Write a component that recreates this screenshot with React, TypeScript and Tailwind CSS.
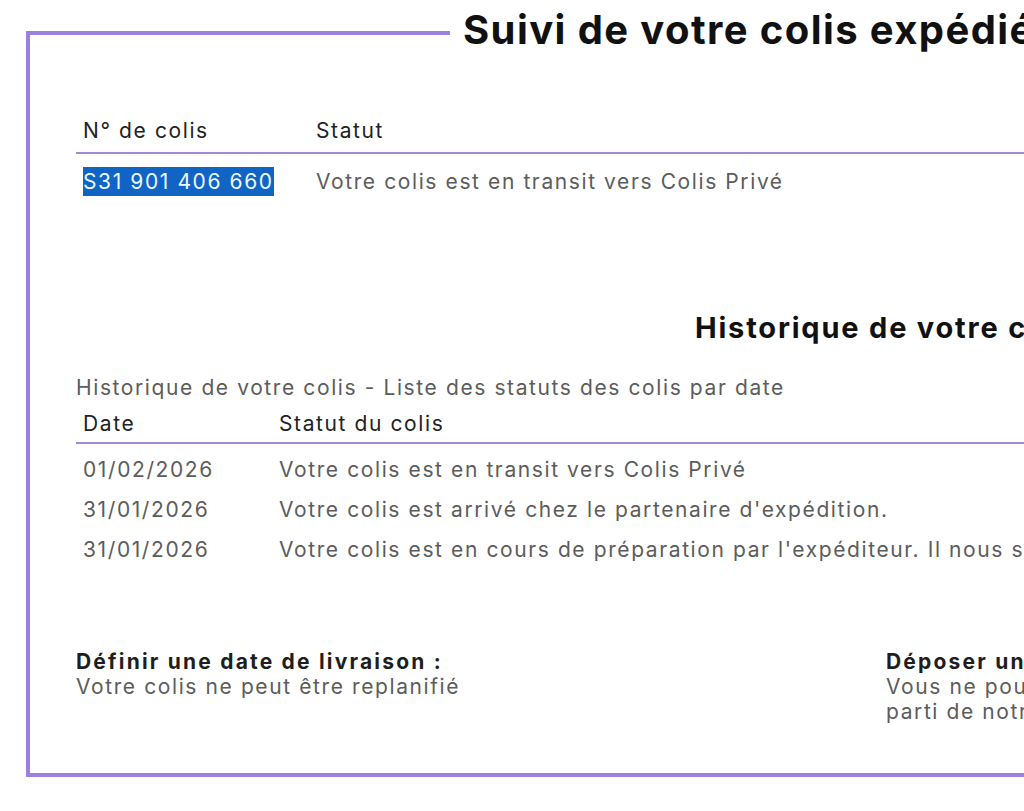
const purple = "border-[#9d7fdf]"

const history = [
  { date: "01/02/2026", status: "Votre colis est en transit vers Colis Privé" },
  { date: "31/01/2026", status: "Votre colis est arrivé chez le partenaire d'expédition." },
  {
    date: "31/01/2026",
    status: "Votre colis est en cours de préparation par l'expéditeur. Il nous sera remis prochainement.",
  },
]

export default function App() {
  return (
    <div className="h-[811px] w-[1024px] overflow-hidden bg-white font-['Inter',sans-serif] tracking-[1.6px]">
      <div className="w-[1800px] pl-[26px]">
        {/* fieldset-like frame: top edge broken by the title */}
        <div className="flex h-[66px] items-start">
          <div className={`mt-[31px] h-[35px] w-[424px] border-l-4 border-t-4 ${purple}`} />
          <h1 className="mt-[10px] whitespace-nowrap px-[13px] text-[40px] font-bold leading-none tracking-[1.4px] text-[#111]">
            Suivi de votre colis expédié
          </h1>
          <div className={`mt-[31px] h-[35px] flex-1 border-r-4 border-t-4 ${purple}`} />
        </div>

        <div className={`border-b-4 border-l-4 border-r-4 ${purple} pb-[49px] pl-[46px] pt-[51px]`}>
          {/* parcel table */}
          <div className="w-[1600px] text-[21px] leading-[28px]">
            <div className="grid grid-cols-[233px_1fr] border-b-2 border-[#a488d8] pb-[7px] text-[#222]">
              <div className="pl-[7px]">N° de colis</div>
              <div className="pl-[7px]">Statut</div>
            </div>
            <div className="grid grid-cols-[233px_1fr] pt-[14px] text-[#5c5c5c]">
              <div className="pl-[7px]">
                <span className="bg-[#0f64c4] py-[2px] text-[#eef8ff]">S31 901 406 660</span>
              </div>
              <div className="pl-[7px]">Votre colis est en transit vers Colis Privé</div>
            </div>
          </div>

          <h2 className="ml-[619px] mt-[114px] whitespace-nowrap text-[29px] font-bold leading-[36px] tracking-[1.8px] text-[#111]">
            Historique de votre colis
          </h2>

          <p className="mt-[28px] whitespace-nowrap text-[21px] leading-[28px] text-[#5c5c5c]">
            Historique de votre colis - Liste des statuts des colis par date
          </p>

          {/* history table */}
          <div className="mt-[8px] w-[1600px] text-[21px] leading-[28px]">
            <div className="grid grid-cols-[196px_1fr] border-b-2 border-[#a488d8] pb-[4px] text-[#222]">
              <div className="pl-[7px]">Date</div>
              <div className="pl-[7px]">Statut du colis</div>
            </div>
            {history.map((row, i) => (
              <div key={i} className="grid grid-cols-[196px_1fr] pt-[12px] text-[#5c5c5c]">
                <div className="pl-[7px]">{row.date}</div>
                <div className="whitespace-nowrap pl-[7px]">{row.status}</div>
              </div>
            ))}
          </div>

          {/* actions */}
          <div className="mt-[85px] grid grid-cols-[810px_1fr] text-[21px] leading-[25px]">
            <div>
              <div className="font-bold tracking-[2.2px] text-[#1e1e1e]">Définir une date de livraison :</div>
              <div className="text-[#5c5c5c]">Votre colis ne peut être replanifié</div>
            </div>
            <div>
              <div className="whitespace-nowrap font-bold tracking-[2.2px] text-[#1e1e1e]">Déposer une réclamation :</div>
              <div className="text-[#5c5c5c]">
                <div className="whitespace-nowrap">Vous ne pouvez pas encore déposer de réclamation, votre colis n'est pas</div>
                <div className="whitespace-nowrap">parti de notre centre de tri.</div>
              </div>
            </div>
          </div>
        </div>
      </div>
    </div>
  )
}
